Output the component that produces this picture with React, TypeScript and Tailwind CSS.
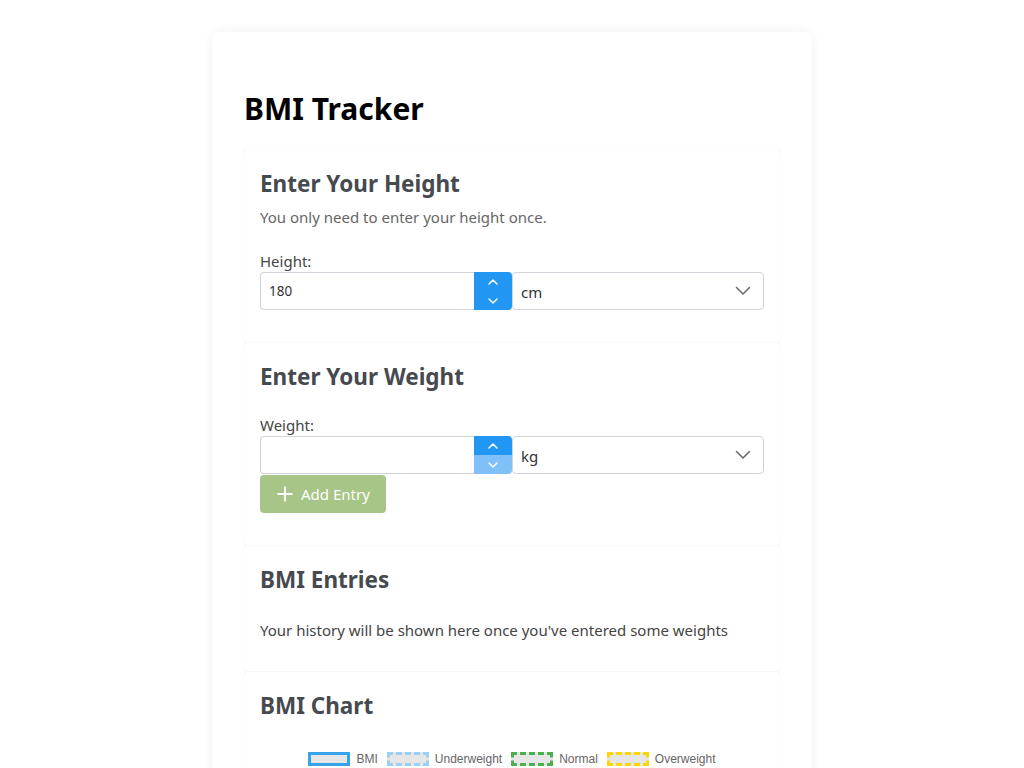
const font = { fontFamily: '"Noto Sans", "Open Sans", sans-serif' };

function Spinner({ downDisabled }: { downDisabled?: boolean }) {
  return (
    <div className="flex w-[38px] flex-col overflow-hidden rounded-r-[4px]">
      <div className="flex h-1/2 items-center justify-center bg-[#2196f3]">
        <svg width="10" height="6" viewBox="0 0 10 6" fill="none">
          <path d="M1 5L5 1L9 5" stroke="white" strokeWidth="1.5" strokeLinecap="round" strokeLinejoin="round" />
        </svg>
      </div>
      <div className={`flex h-1/2 items-center justify-center ${downDisabled ? "bg-[#7fc0f8]" : "bg-[#2196f3]"}`}>
        <svg width="10" height="6" viewBox="0 0 10 6" fill="none">
          <path d="M1 1L5 5L9 1" stroke="white" strokeWidth="1.5" strokeLinecap="round" strokeLinejoin="round" />
        </svg>
      </div>
    </div>
  );
}

function UnitSelect({ unit }: { unit: string }) {
  return (
    <div className="flex flex-1 items-center justify-between rounded-[4px] border border-[#ced4da] bg-white pl-2 pr-3 text-[15px] text-[#333]">
      <span className="pt-[2px]">{unit}</span>
      <svg width="16" height="10" viewBox="0 0 16 10" fill="none">
        <path d="M1.5 1.5L8 8L14.5 1.5" stroke="#6b6b6b" strokeWidth="1.6" strokeLinecap="round" strokeLinejoin="round" />
      </svg>
    </div>
  );
}

function NumberRow({ value, unit, downDisabled }: { value: string; unit: string; downDisabled?: boolean }) {
  return (
    <div className="flex h-[38px]">
      <div className="flex w-[214px] items-center rounded-l-[4px] border border-r-0 border-[#ced4da] bg-white px-2 text-[13.5px] text-[#333]">
        {value}
      </div>
      <Spinner downDisabled={downDisabled} />
      <UnitSelect unit={unit} />
    </div>
  );
}

function Section({ children, className = "" }: { children: React.ReactNode; className?: string }) {
  return (
    <section className={`rounded-[3px] bg-white px-4 pt-[18px] shadow-[0_0_1px_rgba(0,0,0,0.18)] ${className}`}>
      {children}
    </section>
  );
}

function Heading({ children }: { children: React.ReactNode }) {
  return <h2 className="text-[22.5px] font-bold leading-[32px] text-[#464a4f]">{children}</h2>;
}

const legend = [
  { label: "BMI", cls: "border-[3px] border-solid border-[#36a2eb]" },
  { label: "Underweight", cls: "border-[3px] border-dashed border-[#9ad0f5]" },
  { label: "Normal", cls: "border-[3px] border-dashed border-[#4caf50]" },
  { label: "Overweight", cls: "border-[3px] border-dashed border-[#ffd700]" },
];

export default function App() {
  return (
    <div className="min-h-screen bg-white pt-8" style={font}>
      <div className="mx-auto w-[600px] rounded-lg bg-white px-8 pb-8 pt-[58px] shadow-[0_0_12px_rgba(0,0,0,0.06)]">
        <h1 className="mb-[22px] text-[30px] font-bold leading-[38px] text-black">BMI Tracker</h1>

        <div className="flex flex-col gap-px">
          <Section className="pb-8">
            <Heading>Enter Your Height</Heading>
            <p className="mt-[5px] text-[15px] leading-[24px] text-[#666]">You only need to enter your height once.</p>
            <label className="mt-[22px] block text-[15px] leading-[21px] text-[#444]">Height:</label>
            <NumberRow value="180" unit="cm" />
          </Section>

          <Section className="pb-8">
            <Heading>Enter Your Weight</Heading>
            <label className="mt-[22px] block text-[15px] leading-[21px] text-[#444]">Weight:</label>
            <NumberRow value="" unit="kg" downDisabled />
            <button className="mt-px flex h-[38px] items-center gap-2 rounded-[4px] bg-[#a7c587] pl-[17px] pr-4 text-[15px] text-white">
              <svg width="16" height="16" viewBox="0 0 16 16" fill="none">
                <path d="M8 0.5V15.5M0.5 8H15.5" stroke="white" strokeWidth="1.8" />
              </svg>
              Add Entry
            </button>
          </Section>

          <Section className="pb-[29px]">
            <Heading>BMI Entries</Heading>
            <p className="mt-[22px] text-[15px] leading-[24px] text-[#444]">
              Your history will be shown here once you've entered some weights
            </p>
          </Section>

          <Section className="pb-4">
            <Heading>BMI Chart</Heading>
            <div
              className="mt-[28px] flex items-center justify-center text-[12px] text-[#666]"
              style={{ fontFamily: '"Liberation Sans", Arial, sans-serif' }}
            >
              {legend.map((l, i) => (
                <div key={l.label} className={`flex items-center gap-[6px] ${i > 0 ? "ml-[9px]" : ""}`}>
                  <span className={`box-border h-[14px] w-[42px] bg-[#e6e6e6] ${l.cls}`} />
                  <span>{l.label}</span>
                </div>
              ))}
            </div>
            <div className="h-[260px]" />
          </Section>
        </div>
      </div>
    </div>
  );
}
